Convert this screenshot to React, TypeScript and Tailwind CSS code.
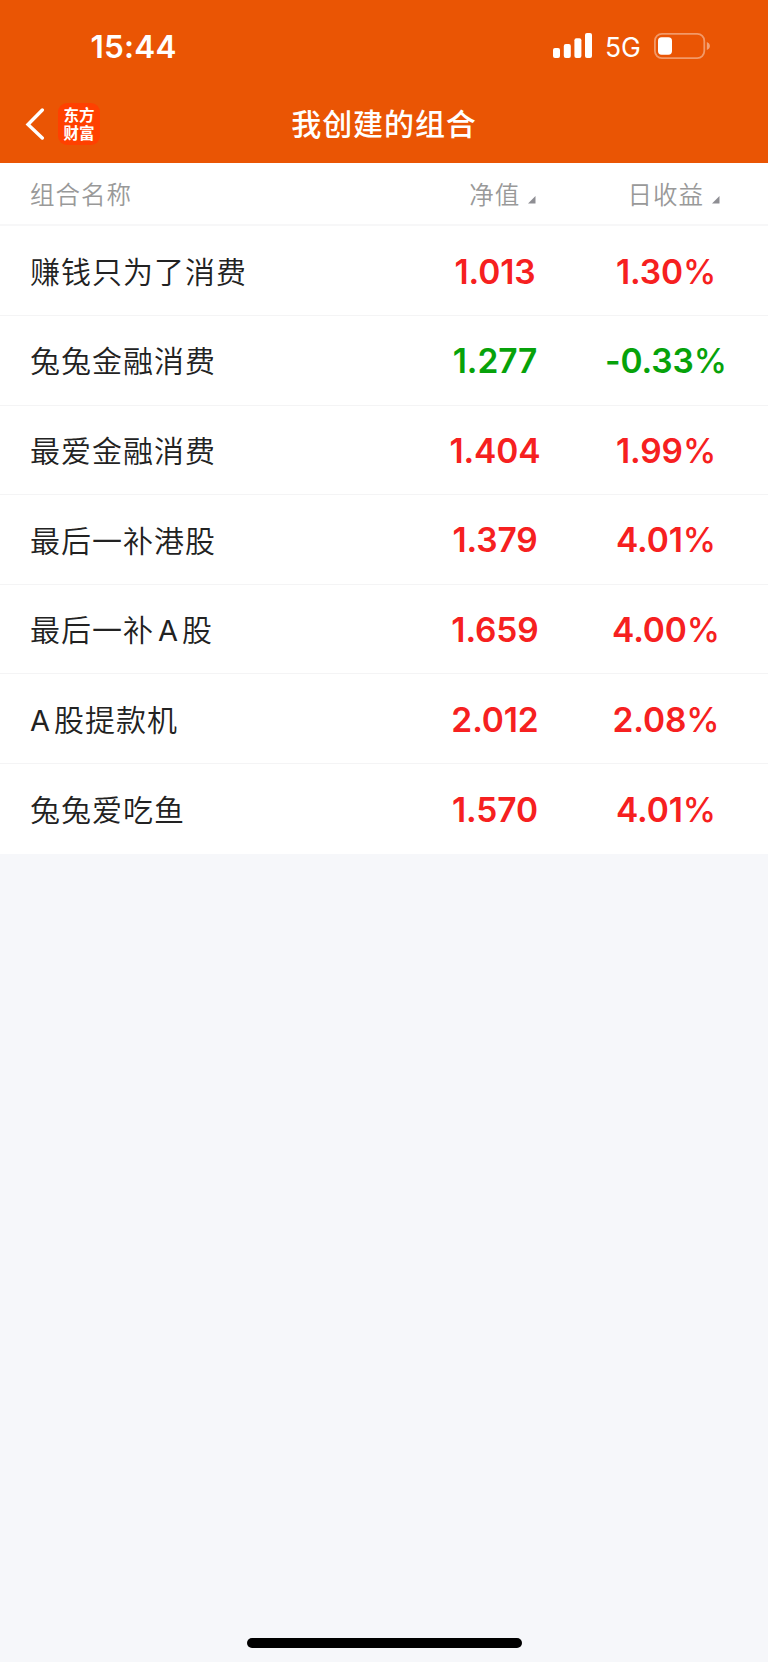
const cjk = "font-['Noto_Sans_CJK_SC',sans-serif]";
const latin = "font-['Inter',sans-serif]";

type Portfolio = {
  name: string;
  netValue: string;
  dailyReturn: string;
};

const portfolios: Portfolio[] = [
  { name: "赚钱只为了消费", netValue: "1.013", dailyReturn: "1.30%" },
  { name: "兔兔金融消费", netValue: "1.277", dailyReturn: "-0.33%" },
  { name: "最爱金融消费", netValue: "1.404", dailyReturn: "1.99%" },
  { name: "最后一补港股", netValue: "1.379", dailyReturn: "4.01%" },
  { name: "最后一补A股", netValue: "1.659", dailyReturn: "4.00%" },
  { name: "A股提款机", netValue: "2.012", dailyReturn: "2.08%" },
  { name: "兔兔爱吃鱼", netValue: "1.570", dailyReturn: "4.01%" },
];

function SignalIcon() {
  return (
    <svg width="40" height="26" viewBox="0 0 40 26" fill="#fff">
      <rect x="0" y="15" width="7" height="10" rx="2" />
      <rect x="10.8" y="11" width="7" height="14" rx="2" />
      <rect x="21.4" y="5.2" width="7" height="19.8" rx="2" />
      <rect x="32" y="0" width="7" height="25" rx="2" />
    </svg>
  );
}

function BatteryIcon() {
  return (
    <svg width="57" height="26" viewBox="0 0 57 26" fill="none">
      <rect x="0.9" y="0.9" width="49.4" height="24.2" rx="7" stroke="#fff" strokeOpacity="0.4" strokeWidth="1.8" />
      <path d="M52.8 9v8c1.9-.7 3.1-2.2 3.1-4s-1.2-3.3-3.1-4Z" fill="#fff" fillOpacity="0.45" />
      <rect x="4" y="4.3" width="14" height="17.4" rx="3.6" fill="#fff" />
    </svg>
  );
}

function StatusBar() {
  return (
    <div className={`flex h-[91px] items-center justify-between pl-[90.5px] pr-[57px] text-white ${latin}`}>
      <span className="pt-[2px] text-[31.5px] font-semibold leading-none tracking-[0.2px]">15:44</span>
      <div className="flex items-center">
        <SignalIcon />
        <span className="ml-3 mr-px w-[48px] pt-[3px] text-[26.5px] leading-none">5G</span>
        <BatteryIcon />
      </div>
    </div>
  );
}

function NavBar() {
  return (
    <div className={`grid h-[65px] grid-cols-[1fr_auto_1fr] items-center text-white ${cjk}`}>
      <div className="flex items-center pl-[25px]">
        <svg width="20" height="32" viewBox="0 0 20 32" fill="none" stroke="#fff" strokeWidth="3.4" strokeLinecap="round">
          <path d="M17.3 2 3 16.5 17.3 30" />
        </svg>
        <div className="ml-[13px] flex size-[42px] items-center justify-center rounded-[9px] bg-[#ff4000] pb-[2px]">
          <p className="text-[15.5px] font-bold leading-[18px]">
            东方
            <br />
            财富
          </p>
        </div>
      </div>
      <h1 className="-mt-[3px] text-[30px] font-medium leading-none tracking-[0.9px]">我创建的组合</h1>
    </div>
  );
}

function SortLabel({ label }: { label: string }) {
  return (
    <span className="flex items-end justify-center pl-[15.5px]">
      {label}
      <svg className="mb-[2px] ml-[8px]" width="8" height="8" viewBox="0 0 8 8" fill="#8e8e93">
        <path d="M7.5 0v7.5H0Z" />
      </svg>
    </span>
  );
}

/** Latin letters inside a Chinese name get a little air on both sides. */
function PortfolioName({ name }: { name: string }) {
  return (
    <span className={`pb-[2px] text-[30px] font-[350] leading-none tracking-[1px] text-[#222] ${cjk}`}>
      {name.split(/([A-Z])/).filter(Boolean).map((part, i) =>
        /[A-Z]/.test(part) ? (
          <span key={i} className={`mr-[3px] text-[29px] font-normal leading-[0] ${latin} ${i > 0 ? "ml-[4px]" : ""}`}>{part}</span>
        ) : (
          part
        ),
      )}
    </span>
  );
}

function PortfolioRow({ name, netValue, dailyReturn }: Portfolio) {
  const color = dailyReturn.startsWith("-") ? "text-[#07a20a]" : "text-[#f62020]";
  const figure = `pt-[3px] text-center text-[33.5px] font-semibold leading-none tracking-[-0.1px] ${color} ${latin}`;
  return (
    <li className="grid h-[89.6px] grid-cols-[380px_170px_172px] items-center border-b border-[#f4f4f5] pl-[30px] last:border-b-0">
      <PortfolioName name={name} />
      <span className={figure}>{netValue}</span>
      <span className={figure}>
        {dailyReturn.slice(0, -1)}
        <span className="font-medium">%</span>
      </span>
    </li>
  );
}

export default function App() {
  return (
    <div className="flex h-[1662px] w-[768px] flex-col bg-[#f6f7fa]">
      <header className="h-[163.3px] bg-[#ea5504]">
        <StatusBar />
        <NavBar />
      </header>
      <main className="bg-white">
        <div className={`grid h-[63.2px] grid-cols-[380px_170px_172px] items-center border-b-2 border-[#f7f7f8] pl-[30px] text-[24.5px] font-[350] leading-none tracking-[1px] text-[#999] ${cjk}`}>
          <span>组合名称</span>
          <SortLabel label="净值" />
          <SortLabel label="日收益" />
        </div>
        <ul>
          {portfolios.map((item) => (
            <PortfolioRow key={item.name} {...item} />
          ))}
        </ul>
      </main>
      <div className="mb-[14px] mt-auto h-[10px] w-[275px] self-center rounded-full bg-black" />
    </div>
  );
}
